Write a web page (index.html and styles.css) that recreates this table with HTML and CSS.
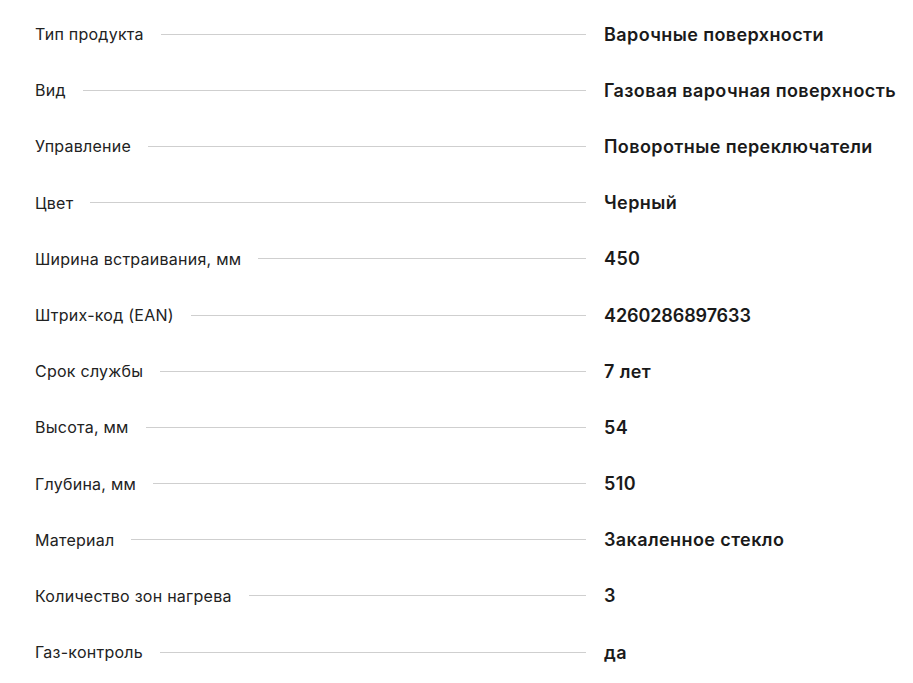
FILE: index.html
```html
<!DOCTYPE html>
<html lang="ru">
<head>
<meta charset="utf-8">
<link rel="stylesheet" href="styles.css">
</head>
<body>
<div class="specs">
  <div class="row"><span class="label">Тип продукта</span><span class="dots"></span><span class="value">Варочные поверхности</span></div>
  <div class="row"><span class="label">Вид</span><span class="dots"></span><span class="value">Газовая варочная поверхность</span></div>
  <div class="row"><span class="label">Управление</span><span class="dots"></span><span class="value">Поворотные переключатели</span></div>
  <div class="row"><span class="label">Цвет</span><span class="dots"></span><span class="value">Черный</span></div>
  <div class="row"><span class="label">Ширина встраивания, мм</span><span class="dots"></span><span class="value">450</span></div>
  <div class="row"><span class="label">Штрих-код (EAN)</span><span class="dots"></span><span class="value num">4260286897633</span></div>
  <div class="row"><span class="label">Срок службы</span><span class="dots"></span><span class="value">7 лет</span></div>
  <div class="row"><span class="label">Высота, мм</span><span class="dots"></span><span class="value">54</span></div>
  <div class="row"><span class="label">Глубина, мм</span><span class="dots"></span><span class="value">510</span></div>
  <div class="row"><span class="label">Материал</span><span class="dots"></span><span class="value">Закаленное стекло</span></div>
  <div class="row"><span class="label">Количество зон нагрева</span><span class="dots"></span><span class="value">3</span></div>
  <div class="row"><span class="label">Газ-контроль</span><span class="dots"></span><span class="value">да</span></div>
</div>
</body>
</html>
```
FILE: styles.css
```css
html, body {
  margin: 0;
  padding: 0;
  background: #ffffff;
}
body {
  font-family: Inter, "Noto Sans", sans-serif;
  color: #1c1c1c;
}
.specs {
  padding: 6px 0 0 35px;
}
.row {
  display: flex;
  align-items: center;
  height: 56.2px;
}
.label {
  font-size: 16px;
  font-weight: 400;
  letter-spacing: 0.25px;
  white-space: nowrap;
  color: #222;
}
.dots {
  flex: 1;
  height: 1px;
  background: #cfcfcf;
  margin: 0 18px 0 17px;
}
.value {
  width: 309px;
  font-size: 18px;
  font-weight: 600;
  letter-spacing: 0.4px;
  white-space: nowrap;
  color: #1a1a1a;
}
.value.num {
  letter-spacing: -0.1px;
}
```
